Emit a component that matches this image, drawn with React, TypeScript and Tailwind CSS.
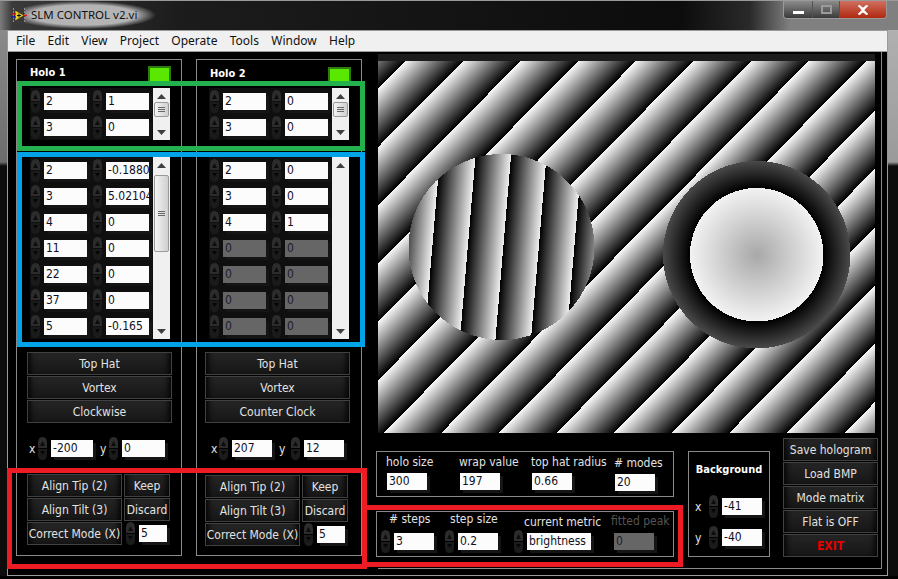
import React from "react";

const labelFont = "font-['DejaVu_Sans_Condensed','DejaVu_Sans',sans-serif]";

function Spinner() {
  return (
    <svg width="11" height="23" viewBox="0 0 11 23" className="shrink-0">
      <path d="M1 11V6Q1 0 5.5 0Q10 0 10 6V11Z" fill="#2c2c2c" />
      <path d="M5.5 4L8 9H3Z" fill="#0c0c0c" />
      <path d="M1 12H10V17Q10 23 5.5 23Q1 23 1 17Z" fill="#1b1b1b" />
      <path d="M3 14H8L5.5 18Z" fill="#060606" />
    </svg>
  );
}

function Value({ value, width, disabled }: { value: string; width: string; disabled?: boolean }) {
  return (
    <div
      className={`${width} h-[17px] shrink-0 overflow-hidden whitespace-nowrap pl-[2px] text-[12px] leading-[17px] shadow-[3px_3px_0_#151515] ${
        disabled ? "bg-[#666666] text-[#1c1c2c]" : "bg-[#fcfcfc] text-[#10101c]"
      }`}
    >
      {value}
    </div>
  );
}

function Num({ value, width, disabled }: { value: string; width: string; disabled?: boolean }) {
  return (
    <div className="flex h-[17px] items-center gap-[3px]">
      <Spinner />
      <Value value={value} width={width} disabled={disabled} />
    </div>
  );
}

function Arrow({ up }: { up?: boolean }) {
  return (
    <svg width="9" height="5" viewBox="0 0 9 5" className="shrink-0">
      <path d={up ? "M4.5 0L9 5H0Z" : "M0 0H9L4.5 5Z"} fill="#404040" />
    </svg>
  );
}

function Scrollbar({ rows, thumb }: { rows: number; thumb?: "small" | "large" }) {
  return (
    <div className={`flex w-[17px] shrink-0 flex-col items-center bg-[#f0f0f0] pt-[6px] ${rows === 2 ? "h-[52px]" : "h-[182px]"}`}>
      <Arrow up />
      {thumb && (
        <div
          className={`flex w-[15px] flex-col items-center justify-center gap-[1px] rounded-[2px] border border-[#9a9a9a] bg-[linear-gradient(90deg,#f4f4f4,#cfcfcf)] ${
            thumb === "small" ? "mt-[3px] h-[15px]" : "mt-[7px] h-[77px]"
          }`}
        >
          <div className="h-px w-[7px] bg-[#666666]" />
          <div className="h-px w-[7px] bg-[#666666]" />
          <div className="h-px w-[7px] bg-[#666666]" />
        </div>
      )}
      <div className="flex-1" />
      <div className="pb-[5px]">
        <Arrow />
      </div>
    </div>
  );
}

type Row = [string, string, boolean?];

function Table({ rows, inset, thumb }: { rows: Row[]; inset: string; thumb?: "small" | "large" }) {
  return (
    <div className={`flex ${inset}`}>
      <div className="flex w-[123px] flex-col">
        {rows.map((row, i) => (
          <div key={i} className="flex h-[26px] items-center gap-[5px] bg-[#0f0f0f]">
            <Num value={row[0]} width="w-[43px]" disabled={row[2]} />
            <Num value={row[1]} width="w-[43px]" disabled={row[2]} />
          </div>
        ))}
      </div>
      <Scrollbar rows={rows.length} thumb={thumb} />
    </div>
  );
}

function Btn({ children, width, red }: { children: React.ReactNode; width: string; red?: boolean }) {
  return (
    <div
      className={`${width} flex h-[23px] shrink-0 items-center justify-center whitespace-nowrap border border-[#414141] bg-[linear-gradient(180deg,#252525,#161616)] pt-px text-[12px] shadow-[inset_8px_0_6px_-6px_#000,inset_-8px_0_6px_-6px_#000] ${
        red ? "font-bold text-[#e80000]" : "text-[#e2e2e2]"
      }`}
    >
      {children}
    </div>
  );
}

function AlignBlock({ className }: { className: string }) {
  return (
    <div className={`flex flex-col gap-px ${className}`}>
      <div className="flex gap-[2px]">
        <Btn width="w-[95px]">Align Tip (2)</Btn>
        <Btn width="w-[46px]">Keep</Btn>
      </div>
      <div className="flex gap-[2px]">
        <Btn width="w-[95px]">Align Tilt (3)</Btn>
        <Btn width="w-[46px]">Discard</Btn>
      </div>
      <div className="flex items-center gap-[3px]">
        <Btn width="w-[95px]">Correct Mode (X)</Btn>
        <Num value="5" width="w-[28px]" />
      </div>
    </div>
  );
}

function Panel({ title, children, titleClass }: { title: string; children: React.ReactNode; titleClass: string }) {
  return (
    <div className="h-[497px] w-[166px] shrink-0 border border-[#8a8a8a]">
      <div className={`flex h-[28px] items-start justify-between pr-[10px] ${titleClass}`}>
        <span className="mt-[5px] text-[11px] font-bold leading-[16px] text-white">{title}</span>
        <div className="mt-[6px] h-[17px] w-[23px] border-2 border-[#2f7a12] bg-[#5ae800]" />
      </div>
      {children}
    </div>
  );
}

function Hologram() {
  return (
    <svg width="497" height="372" viewBox="0 0 497 372" className="block">
      <defs>
        <linearGradient id="bg" gradientUnits="userSpaceOnUse" x1="27.4" y1="0" x2="56.55" y2="28.8" spreadMethod="repeat">
          <stop offset="0" stopColor="#f6f6f6" />
          <stop offset="1" stopColor="#000000" />
        </linearGradient>
        <linearGradient id="tilt" gradientUnits="userSpaceOnUse" x1="125.3" y1="186" x2="160.55" y2="188.99" spreadMethod="repeat">
          <stop offset="0" stopColor="#000000" />
          <stop offset="1" stopColor="#eeeeee" />
        </linearGradient>
        <radialGradient id="lens" gradientUnits="userSpaceOnUse" cx="378.7" cy="193.7" r="93.7">
          <stop offset="0" stopColor="#a8a8a8" />
          <stop offset="0.712" stopColor="#f2f2f2" />
          <stop offset="0.712" stopColor="#000000" />
          <stop offset="1" stopColor="#4a4a4a" />
        </radialGradient>
      </defs>
      <rect width="497" height="372" fill="url(#bg)" />
      <circle cx="123.5" cy="186" r="93" fill="url(#tilt)" shapeRendering="crispEdges" />
      <circle cx="378.7" cy="193.7" r="93.7" fill="url(#lens)" shapeRendering="crispEdges" />
    </svg>
  );
}

function ViIcon() {
  return (
    <svg width="16" height="15" viewBox="0 0 16 15" className="shrink-0">
      <rect x="2" y="0" width="12" height="15" fill="#3a3a3a" />
      <path d="M2 1H3M2 4H3M2 7H3M2 10H3M2 13H3M13 1H14M13 4H14M13 7H14M13 10H14M13 13H14" stroke="#e8e8e8" />
      <path d="M4 2L13 7.5L4 13Z" fill="#e8d020" stroke="#222222" strokeWidth="0.6" />
      <path d="M6 7.5H10M8 5.5V9.5" stroke="#111111" />
      <path d="M0 6H5" stroke="#e01010" strokeWidth="1.4" />
      <path d="M0 9H5" stroke="#1818d8" strokeWidth="1.4" />
      <path d="M12 7.5H16" stroke="#e01010" strokeWidth="1.4" />
    </svg>
  );
}

function TitleBar() {
  return (
    <div className="flex h-[30px] shrink-0 items-start justify-between border-t border-[#9a9a9a] bg-[linear-gradient(90deg,#7c7c7c_0px,#3a3a3a_12px,#1c1c1c_180px,#0c0c0c_680px,#2a2a2a_750px,#808080_790px)] pl-[11px] pr-[11px]">
      <div className="flex h-[28px] w-[145px] items-center gap-[4px] bg-[radial-gradient(closest-side,#b4b4b4_72%,transparent)]">
        <ViIcon />
        <span className="font-['Noto_Sans',sans-serif] text-[11.5px] leading-[16px] text-[#111111]">SLM CONTROL v2.vi</span>
      </div>
      <div className="flex h-[18px] overflow-hidden rounded-b-[4px] border border-t-0 border-[#9a9a9a]">
        <div className="flex w-[29px] items-end justify-center border-r border-[#555555] bg-[linear-gradient(180deg,#8c8c8c,#3a3a3a)] pb-[4px]">
          <div className="h-[3px] w-[11px] bg-white" />
        </div>
        <div className="flex w-[27px] items-center justify-center border-r border-[#555555] bg-[linear-gradient(180deg,#8c8c8c,#3a3a3a)]">
          <div className="h-[9px] w-[11px] border-2 border-[#9a9a9a]" />
        </div>
        <div className="flex w-[46px] items-center justify-center bg-[linear-gradient(180deg,#d07060,#b02810)]">
          <svg width="12" height="10" viewBox="0 0 12 10">
            <path d="M1.5 0.5L6 4L10.5 0.5M1.5 9.5L6 6L10.5 9.5M3 1.5L9 8.5M9 1.5L3 8.5" stroke="#ffffff" strokeWidth="2.2" fill="none" />
          </svg>
        </div>
      </div>
    </div>
  );
}

function MenuBar() {
  return (
    <div className="flex h-[22px] shrink-0 items-center gap-[12.3px] border-y border-[#9a9a9a] bg-[#f0f0f0] pl-2 font-['Noto_Sans',sans-serif] text-[12px] text-[#111111]">
      {["File", "Edit", "View", "Project", "Operate", "Tools", "Window", "Help"].map((m) => (
        <span key={m}>{m}</span>
      ))}
    </div>
  );
}

function Field({ label, value, width, className }: { label: string; value: string; width: string; className: string }) {
  return (
    <div className={`flex flex-col ${className}`}>
      <span className="h-[16px] whitespace-nowrap text-[12px] leading-[16px] text-[#e2e2e2]">{label}</span>
      <div className="mt-[3px] pl-[1px]">
        <Value value={value} width={width} />
      </div>
    </div>
  );
}

function StepField({
  label,
  labelClass,
  children,
  className,
}: {
  label: string;
  labelClass: string;
  children: React.ReactNode;
  className: string;
}) {
  return (
    <div className={`flex flex-col ${className}`}>
      <span className={`h-[16px] whitespace-nowrap text-[12px] leading-[16px] ${labelClass}`}>{label}</span>
      {children}
    </div>
  );
}

export default function App() {
  const greenRows1: Row[] = [["2", "1"], ["3", "0"]];
  const greenRows2: Row[] = [["2", "0"], ["3", "0"]];
  const blueRows1: Row[] = [
    ["2", "-0.18805"],
    ["3", "5.02104"],
    ["4", "0"],
    ["11", "0"],
    ["22", "0"],
    ["37", "0"],
    ["5", "-0.165"],
  ];
  const blueRows2: Row[] = [
    ["2", "0"],
    ["3", "0"],
    ["4", "1"],
    ["0", "0", true],
    ["0", "0", true],
    ["0", "0", true],
    ["0", "0", true],
  ];

  return (
    <div className={`relative flex h-[579px] w-[898px] flex-col overflow-hidden bg-black ${labelFont}`}>
      <TitleBar />
      <div className="flex flex-1">
        <div className="w-[7px] bg-[linear-gradient(180deg,#8a8a8a_0px,#6c6c6c_132px,#0c0c0c_136px)]" />
        <div className="flex flex-1 flex-col border-x border-b border-[#9a9a9a]">
          <MenuBar />
          <div className="flex flex-1 pr-[5px]">
            <div className="flex shrink-0 gap-[14px] pl-2 pt-[7px]">
              <Panel title="Holo 1" titleClass="pl-[13px]">
                <Table rows={greenRows1} inset="pl-[13px]" thumb="small" />
                <div className="h-[17px]" />
                <Table rows={blueRows1} inset="pl-[13px]" thumb="large" />
                <div className="ml-[10px] mt-[13px] flex w-[145px] flex-col gap-px">
                  <Btn width="w-full">Top Hat</Btn>
                  <Btn width="w-full">Vortex</Btn>
                  <Btn width="w-full">Clockwise</Btn>
                </div>
                <div className="mt-[17px] flex h-[17px] items-center pl-[12px] text-[12px] text-[#e2e2e2]">
                  <span className="w-[8px]">x</span>
                  <Num value="-200" width="w-[42px]" />
                  <span className="ml-[7px] w-[8px]">y</span>
                  <Num value="0" width="w-[43px]" />
                </div>
                <AlignBlock className="ml-[10px] mt-[17px]" />
              </Panel>
              <Panel title="Holo 2" titleClass="pl-[13px] pt-px">
                <Table rows={greenRows2} inset="pl-[12px]" thumb="small" />
                <div className="h-[17px]" />
                <Table rows={blueRows2} inset="pl-[12px]" />
                <div className="ml-[8px] mt-[13px] flex w-[145px] flex-col gap-px">
                  <Btn width="w-full">Top Hat</Btn>
                  <Btn width="w-full">Vortex</Btn>
                  <Btn width="w-full">Counter Clock</Btn>
                </div>
                <div className="mt-[17px] flex h-[17px] items-center pl-[14px] text-[12px] text-[#e2e2e2]">
                  <span className="w-[7px]">x</span>
                  <Num value="207" width="w-[40px]" />
                  <span className="ml-[7px] w-[11px]">y</span>
                  <Num value="12" width="w-[40px]" />
                </div>
                <AlignBlock className="ml-[8px] mt-[18px]" />
              </Panel>
            </div>
            <div className="mb-[6px] ml-4 flex flex-1 flex-col border-b border-r border-[#8a8a8a] pt-[2px]">
              <div className="h-[7px] w-[497px] bg-[#1c1c1c]" />
              <Hologram />
              <div className="-ml-[2px] mt-[5px] flex">
                <div className="flex w-[298px] shrink-0 flex-col pt-[13px]">
                  <div className="flex h-[46px] border border-[#8a8a8a] pl-[9px] pt-[2px]">
                    <Field label="holo size" value="300" width="w-[40px]" className="w-[73px]" />
                    <Field label="wrap value" value="197" width="w-[40px]" className="w-[72px]" />
                    <Field label="top hat radius" value="0.66" width="w-[40px]" className="w-[83px]" />
                    <Field label="# modes" value="20" width="w-[40px]" className="mt-px" />
                  </div>
                  <div className="mt-[14px] flex h-[46px] items-end border border-[#8a8a8a] pb-[6px] pl-[3px]">
                    <StepField label="# steps" labelClass="ml-[9px] mb-[6px] text-[#e2e2e2]" className="w-[54px]">
                      <Num value="3" width="w-[40px]" />
                    </StepField>
                    <StepField label="step size" labelClass="ml-[6px] mb-[6px] text-[#e2e2e2]" className="ml-[10px] w-[54px]">
                      <Num value="0.2" width="w-[40px]" />
                    </StepField>
                    <StepField label="current metric" labelClass="ml-[11px] mb-[3px] text-[#e2e2e2]" className="ml-[15px] w-[78px]">
                      <Num value="brightness" width="w-[64px]" />
                    </StepField>
                    <StepField label="fitted peak" labelClass="-ml-[3px] mb-[4px] text-[#555555]" className="ml-[23px] w-[40px]">
                      <Value value="0" width="w-[40px]" disabled />
                    </StepField>
                  </div>
                </div>
                <div className="ml-[14px] mt-[13px] flex h-[106px] w-[82px] shrink-0 flex-col border border-[#8a8a8a] pl-[6px] pt-[10px] text-[12px] text-[#e2e2e2]">
                  <div className="-ml-[6px] h-[16px] text-center text-[11px] font-bold leading-[16px] text-white">Background</div>
                  <div className="mt-[20px] flex h-[17px] items-center">
                    <span className="w-[13px]">x</span>
                    <Num value="-41" width="w-[40px]" />
                  </div>
                  <div className="mt-[14px] flex h-[17px] items-center">
                    <span className="w-[13px]">y</span>
                    <Num value="-40" width="w-[40px]" />
                  </div>
                </div>
                <div className="ml-[13px] flex w-[95px] shrink-0 flex-col gap-px">
                  <Btn width="w-full">Save hologram</Btn>
                  <Btn width="w-full">Load BMP</Btn>
                  <Btn width="w-full">Mode matrix</Btn>
                  <Btn width="w-full">Flat is OFF</Btn>
                  <Btn width="w-full" red>
                    EXIT
                  </Btn>
                </div>
              </div>
            </div>
          </div>
        </div>
        <div className="w-[10px] bg-[linear-gradient(180deg,#b0b0b0_0px,#9a9a9a_132px,#0c0c0c_136px)]" />
      </div>
      <div className="h-[3px] shrink-0" />

      {/* hand-drawn annotation boxes over the front panel */}
      <div className="pointer-events-none absolute left-[17px] top-[81px] h-[70px] w-[348px] border-[5px] border-[#22b14c]" />
      <div className="pointer-events-none absolute left-[17px] top-[152px] h-[195px] w-[348px] border-[5px] border-[#00a2e8]" />
      <div className="pointer-events-none absolute left-[7px] top-[468px] h-[101px] w-[360px] border-[5px] border-[#ed1c24]" />
      <div className="pointer-events-none absolute left-[362px] top-[505px] h-[62px] w-[321px] border-[5px] border-[#ed1c24]" />
    </div>
  );
}
